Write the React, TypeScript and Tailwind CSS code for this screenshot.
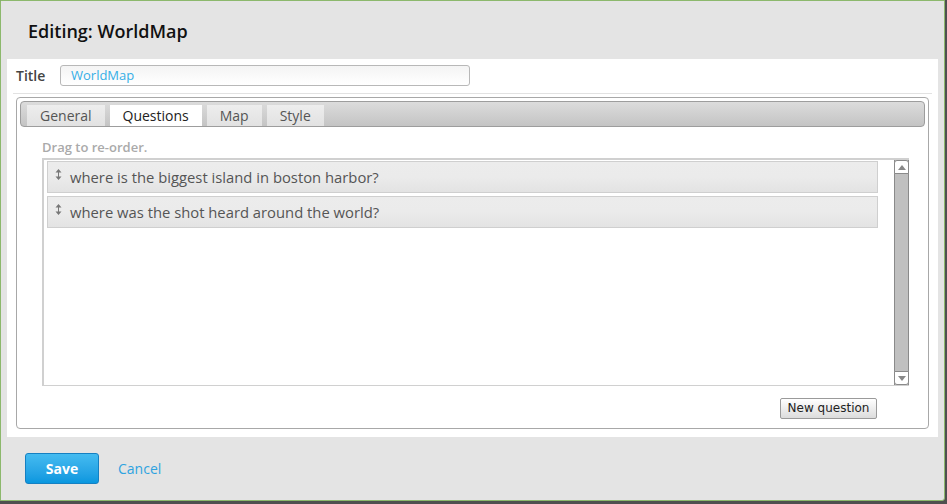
import React from "react";

const tabs = ["General", "Questions", "Map", "Style"];
const questions = [
  "where is the biggest island in boston harbor?",
  "where was the shot heard around the world?",
];

// small up/down drag handle
const DragIcon = () => (
  <svg width="7" height="11" viewBox="0 0 7 11" className="shrink-0">
    <path d="M3.5 0 L6.5 3.5 H0.5 Z M3.5 11 L0.5 7.5 H6.5 Z" fill="#777" />
    <rect x="3" y="3" width="1" height="5" fill="#777" />
  </svg>
);

const Scrollbar = () => (
  <div className="w-[15px] h-full flex flex-col bg-[#c0c0c0] border-x border-[#8a8a8a]">
    <div className="h-[14px] bg-white border border-[#8a8a8a] rounded-t-[3px] -mx-px flex items-center justify-center">
      <svg width="8" height="5" viewBox="0 0 8 5">
        <path d="M4 0 L8 5 H0 Z" fill="#888" />
      </svg>
    </div>
    <div className="grow" />
    <div className="h-[14px] bg-white border border-[#8a8a8a] rounded-b-[3px] -mx-px flex items-center justify-center">
      <svg width="8" height="5" viewBox="0 0 8 5">
        <path d="M0 0 H8 L4 5 Z" fill="#888" />
      </svg>
    </div>
  </div>
);

const App = () => {
  const active = "Questions";
  return (
    <div className="w-[947px] h-[504px] bg-[#4f4f4f] overflow-hidden font-['Open_Sans',sans-serif]">
      <div className="w-[945px] h-[501px] bg-[#e4e4e4] border border-[#8cb86c] rounded-br-[3px] flex flex-col">
        <h1 className="h-[58px] pl-[27px] pt-[18px] text-[18px] font-semibold text-[#111] leading-[24px]">
          Editing: WorldMap
        </h1>

        <section className="mx-[6px] h-[378px] bg-white flex flex-col">
          <div className="flex items-center h-[29px] pl-[9px] pt-[4px]">
            <label className="w-[44px] text-[14px] font-semibold text-[#444]">Title</label>
            <div className="w-[410px] h-[21px] border border-[#b8b8b8] rounded-[3px] bg-gradient-to-b from-[#f4f4f4] to-white flex items-center pl-[10px] text-[13px] text-[#35aee6]">
              WorldMap
            </div>
          </div>
          <div className="mx-[6px] mt-[5px] border-t border-[#e2e2e2]" />

          <div className="mx-[9px] mt-[3px] h-[332px] border border-[#a8a8a8] rounded-[4px] p-[3px] flex flex-col">
            <div className="h-[26px] border border-[#9d9d9d] rounded-[4px] bg-gradient-to-b from-[#dcdcdc] to-[#c4c4c4] flex items-end gap-[5px] pl-[6px]">
              {tabs.map((t) => (
                <div
                  key={t}
                  className={
                    t === active
                      ? "h-[21px] px-[13px] bg-white text-[14px] text-[#222] leading-[21px]"
                      : "h-[21px] px-[13px] bg-gradient-to-b from-[#ededed] to-[#e2e2e2] text-[14px] text-[#555] leading-[21px]"
                  }
                >
                  {t}
                </div>
              ))}
            </div>

            <p className="ml-[22px] mt-[12px] text-[13px] font-semibold text-[#aaa] leading-[16px]">
              Drag to re-order.
            </p>

            <div className="ml-[22px] mr-[16px] mt-[3px] h-[228px] border-t-2 border-l-2 border-b border-[#d0d0d0] flex">
              <ul className="grow flex flex-col gap-[3px] pl-[3px] pt-px">
                {questions.map((q) => (
                  <li
                    key={q}
                    className="w-[831px] h-[32px] border border-[#cfcfcf] bg-gradient-to-b from-[#ececec] via-[#ebebeb] to-[#e3e3e3] flex items-center gap-[8px] pl-[7px] text-[14.8px] text-[#555]"
                  >
                    <span className="-mt-[5px]">
                      <DragIcon />
                    </span>
                    {q}
                  </li>
                ))}
              </ul>
              <Scrollbar />
            </div>

            <div className="flex justify-end mr-[48px] mt-[12px]">
              <button className="w-[97px] h-[21px] border border-[#9a9a9a] rounded-[2px] bg-gradient-to-b from-white to-[#dcdcdc] text-[12px] text-[#222] font-['DejaVu_Sans',sans-serif] leading-[19px]">
                New question
              </button>
            </div>
          </div>
        </section>

        <footer className="flex items-center gap-[19px] pl-[24px] pt-[16px]">
          <button className="w-[74px] h-[31px] rounded-[3px] border border-[#1580c2] bg-gradient-to-b from-[#44bbf0] to-[#0797df] text-white text-[14px] font-bold">
            Save
          </button>
          <a className="text-[14px] text-[#2ea3e0]">Cancel</a>
        </footer>
      </div>
    </div>
  );
};

export default App;
